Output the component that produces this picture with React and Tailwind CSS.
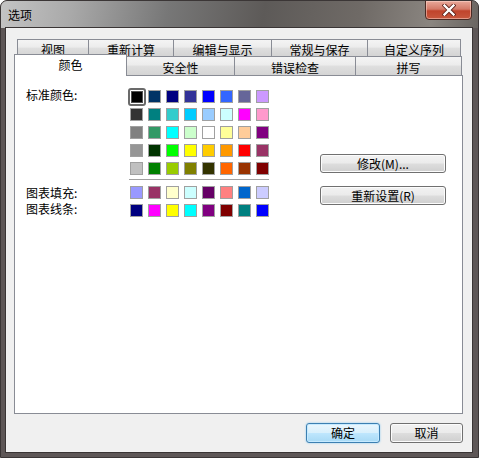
import React from "react";

const STD = [
  ["#000000", "#003366", "#000080", "#333399", "#0000ff", "#3366ff", "#666699", "#cc99ff"],
  ["#333333", "#008080", "#33cccc", "#00ccff", "#99ccff", "#ccffff", "#ff00ff", "#ff99cc"],
  ["#808080", "#339966", "#00ffff", "#ccffcc", "#ffffff", "#ffff99", "#ffcc99", "#800080"],
  ["#969696", "#003300", "#00ff00", "#ffff00", "#ffcc00", "#ff9900", "#ff0000", "#993366"],
  ["#c0c0c0", "#008000", "#99cc00", "#808000", "#333300", "#ff6600", "#993300", "#800000"],
];
const FILL = ["#9999ff", "#993366", "#ffffcc", "#ccffff", "#660066", "#ff8080", "#0066cc", "#ccccff"];
const LINE = ["#000080", "#ff00ff", "#ffff00", "#00ffff", "#800080", "#800000", "#008080", "#0000ff"];

const ROW1 = [
  { label: "视图", cls: "w-[72px] border-l" },
  { label: "重新计算", cls: "w-[85px]" },
  { label: "编辑与显示", cls: "w-[98px]" },
  { label: "常规与保存", cls: "w-[96px]" },
  { label: "自定义序列", cls: "w-[93px]" },
];
const ROW2 = [
  { label: "安全性", cls: "w-[108px]" },
  { label: "错误检查", cls: "w-[121px]" },
  { label: "拼写", cls: "w-[106px]" },
];

const tabBg =
  "bg-[linear-gradient(#f4f4f4,#ececec_45%,#dfdfdf_50%,#d4d4d4)]";

function Cell({ c }) {
  return (
    <div className="w-[18px] h-[18px] pl-[2px] pt-[2px]">
      <div className="w-[13px] h-[13px] border border-[#a0a0a0]" style={{ backgroundColor: c }} />
    </div>
  );
}

function SelectedCell({ c }) {
  return (
    <div className="w-[18px] h-[18px] border-2 border-[#6a6a6a] rounded-[3px] bg-white p-[1px]">
      <div className="w-full h-full border border-[#505050]" style={{ backgroundColor: c }} />
    </div>
  );
}

function Btn({ children, cls }) {
  return (
    <div
      className={
        "flex items-center justify-center border border-[#707070] rounded-[3px] text-[12px] leading-none text-black bg-[linear-gradient(#f2f2f2,#ebebeb_48%,#dddddd_52%,#cfcfcf)] shadow-[inset_0_0_0_1px_#fcfcfc] " +
        cls
      }
    >
      {children}
    </div>
  );
}

export default function App() {
  return (
    <div
      className="w-[479px] h-[458px] flex flex-col rounded-t-[7px] border border-[#3b3636] bg-[#5e5757] overflow-hidden"
      style={{ fontFamily: '"Noto Sans CJK SC", "Liberation Sans", sans-serif' }}
    >
      {/* Title bar */}
      <div className="h-[27px] flex items-start justify-between pr-[6px] bg-[linear-gradient(100deg,#c4c4c4_0%,#a9a9a9_15%,#777777_35%,#5d5a58_55%,#6f6a66_75%,#8a8580_90%,#6a6561_100%)]">
        <div className="pl-[7px] pt-[7px] text-[12px] leading-[14px] text-black">选项</div>
        <div className="w-[47px] h-[20px] -mt-px flex items-center justify-center rounded-b-[4px] border border-[#4a2a24] bg-[linear-gradient(#e9a99b,#d47a68_45%,#c0442c_55%,#c7583e)] shadow-[inset_0_0_0_1px_rgba(255,220,210,0.5)]">
          <svg width="14" height="12" viewBox="0 0 14 12">
            <path d="M2.5 1.5 L11.5 10.5 M11.5 1.5 L2.5 10.5" stroke="#5a2018" strokeWidth="4" strokeLinecap="square" />
            <path d="M2.5 1.5 L11.5 10.5 M11.5 1.5 L2.5 10.5" stroke="#ffffff" strokeWidth="2.4" strokeLinecap="square" />
          </svg>
        </div>
      </div>

      {/* Client */}
      <div className="flex-1 ml-[5px] mr-[6px] mb-[5px] border border-[#f2f2f2] shadow-[0_0_0_1px_#3a3535] bg-[#f0f0f0] flex flex-col pl-[7px] pr-[8px] pt-[10px] pb-[8px]">
        {/* Tabs */}
        <div className="flex pl-[3px] h-[17px]">
          {ROW1.map((t) => (
            <div
              key={t.label}
              className={
                "h-[17px] flex items-center justify-center pt-[3px] border-t border-r border-[#898c95] text-[12px] leading-none text-black " +
                tabBg +
                " " +
                t.cls
              }
            >
              {t.label}
            </div>
          ))}
        </div>
        <div className="flex h-[19px] items-start">
          <div className="relative z-10 -mt-[2px] w-[113px] h-[22px] flex items-center justify-center pb-[1px] bg-white border-l border-t border-r border-[#898c95] text-[12px] leading-none text-black">
            颜色
          </div>
          {ROW2.map((t) => (
            <div
              key={t.label}
              className={
                "h-[19px] flex items-center justify-center pt-[3px] border-t border-r border-[#898c95] text-[12px] leading-none text-black " +
                tabBg +
                " " +
                t.cls
              }
            >
              {t.label}
            </div>
          ))}
        </div>

        {/* Panel */}
        <div className="h-[339px] bg-white border border-[#898c95] flex pt-[12px] pl-[11px]">
          <div className="w-[102px] flex flex-col text-[12px] text-black">
            <div className="leading-[14px] h-[14px]">标准颜色:</div>
            <div className="mt-[83px] leading-[16px] h-[16px]">图表填充:</div>
            <div className="leading-[16px] h-[16px]">图表线条:</div>
          </div>
          <div className="w-[144px] flex flex-col">
            {STD.map((row, ri) => (
              <div key={ri} className="flex">
                {row.map((c, ci) =>
                  ri === 0 && ci === 0 ? <SelectedCell key={ci} c={c} /> : <Cell key={ci} c={c} />
                )}
              </div>
            ))}
            <div className="mt-[1px] ml-[1px] w-[140px] h-px bg-[#a0a0a0]" />
            <div className="mt-[4px] flex">
              {FILL.map((c, i) => (
                <Cell key={i} c={c} />
              ))}
            </div>
            <div className="flex">
              {LINE.map((c, i) => (
                <Cell key={i} c={c} />
              ))}
            </div>
          </div>
          <div className="ml-[48px] pt-[66px] flex flex-col">
            <Btn cls="w-[126px] h-[19px]">修改(M)...</Btn>
            <Btn cls="w-[126px] h-[19px] mt-[13px]">重新设置(R)</Btn>
          </div>
        </div>

        {/* Footer buttons */}
        <div className="mt-[9px] flex justify-end gap-[10px]">
          <div className="w-[74px] h-[20px] flex items-center justify-center rounded-[3px] border border-[#3c7fb1] bg-[linear-gradient(#eaf6fd,#d9f0fc_48%,#bee6fd_52%,#a7d9f5)] shadow-[inset_0_0_0_1px_#c6eaff,0_0_2px_#7fc4ef] text-[12px] leading-none text-black">
            确定
          </div>
          <Btn cls="w-[73px] h-[20px]">取消</Btn>
        </div>
      </div>
    </div>
  );
}
